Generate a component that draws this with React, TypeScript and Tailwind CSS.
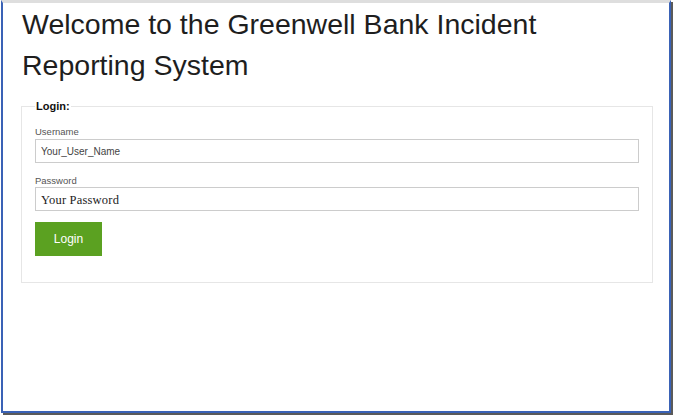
export default function App() {
  return (
    <div className="w-[673px] h-[416px] bg-white overflow-hidden font-['Liberation_Sans',Arial,sans-serif]">
      <div className="ml-[1px] w-[670px] h-[413px] border-x-2 border-b-2 border-x-[#3a62b6] border-b-[#3a62b6] border-t-[3px] border-t-[#dedede] shadow-[2px_2px_0_#5a5a5a] bg-white">
        <div className="pl-[18px] pr-[16px]">
          <h1 className="pl-[1px] pt-[1px] text-[28.5px] leading-[41px] text-[#1e1e1e] font-normal">
            Welcome to the Greenwell Bank Incident
            <br />
            Reporting System
          </h1>

          <fieldset className="mt-[14px] border border-[#e6e6e6] px-[13px] pb-[26px]">
            <legend className="px-[1px] text-[11px] leading-[13px] font-bold text-[#111]">Login:</legend>

            <label className="block mt-[13px] text-[9.5px] leading-[12px] text-[#555]">Username</label>
            <input
              className="block mt-[1px] w-full h-[24px] border border-[#cccccc] px-[5px] text-[10px] text-[#444] outline-none"
              defaultValue="Your_User_Name"
            />

            <label className="block mt-[12px] text-[9.5px] leading-[12px] text-[#555]">Password</label>
            <input
              className="block mt-0 w-full h-[24px] border border-[#cccccc] px-[5px] pt-[3px] text-[12.5px] tracking-[0.2px] text-[#222] outline-none font-['Liberation_Serif',serif]"
              defaultValue="Your Password"
            />

            <button className="block mt-[11px] w-[67px] h-[34px] bg-[#5ba121] text-white text-[12px]">
              Login
            </button>
          </fieldset>
        </div>
      </div>
    </div>
  );
}
